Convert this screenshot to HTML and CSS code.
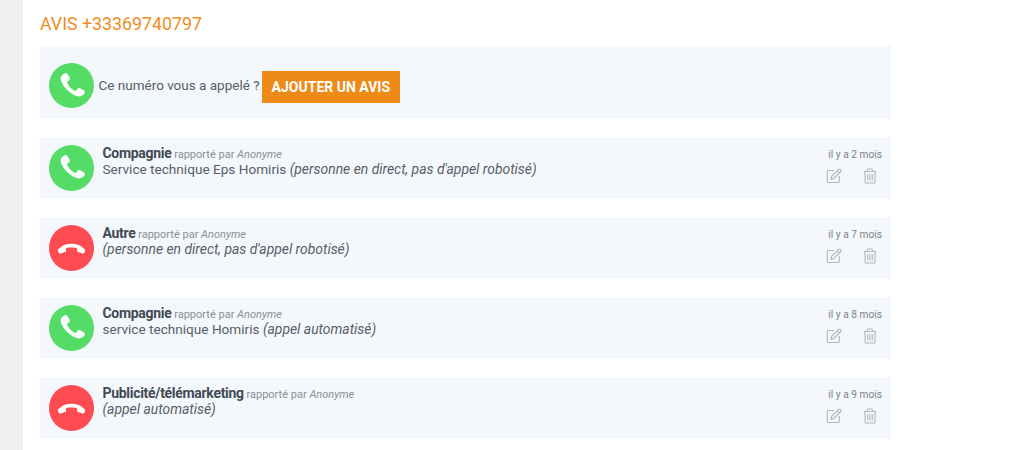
FILE: index.html
```html
<!DOCTYPE html>
<html lang="fr">
<head>
  <meta charset="UTF-8" />
  <title>Avis +33369740797</title>
  <link rel="stylesheet" href="styles.css">
</head>
<body>
  <svg class="sprites" width="0" height="0">
    <symbol id="phone" viewBox="0 0 24 24">
      <path d="M6.600 1.800c.7-.4 1.500-.2 1.900.5l2 3.300c.4.700.2 1.400-.4 1.900L8.700 8.700c-.4.300-.4.700-.3 1.100.6 1.400 1.400 2.800 2.500 3.900s2.500 2.100 4 2.700c.4.100.8.100 1.100-.3l1.200-1.500c.5-.6 1.200-.7 1.900-.4l3.300 2c.7.4.9 1.200.5 1.900-.9 1.700-2.400 3-4.500 3-2.800 0-6.500-1.900-9.700-5.100S3 8.700 3 6.200c0-2 1.400-3.500 3.600-4.400z"/>
    </symbol>
    <symbol id="hangup" viewBox="0 0 24 24">
      <path d="M1.300 13.200C3.800 10.300 7.700 8.900 12 8.900s8.200 1.400 10.700 4.300c.6.700.7 1.400.4 2.100l-.5 1c-.3.600-.9.800-1.500.6l-3.600-1.100c-.6-.2-.9-.6-.9-1.200v-1.500c0-.4-.2-.6-.6-.7-1.300-.3-2.900-.4-4-.4s-2.700.1-4 .4c-.4.100-.6.300-.6.700v1.500c0 .6-.3 1-.9 1.200l-3.600 1.100c-.6.2-1.200 0-1.500-.6l-.5-1c-.3-.7-.2-1.400.4-2.100z"/>
    </symbol>
    <symbol id="edit" viewBox="0 0 16 16">
      <path d="M8 2.500H2.500a1.200 1.200 0 0 0-1.200 1.200v9.600a1.200 1.200 0 0 0 1.200 1.200h9.600a1.200 1.200 0 0 0 1.200-1.200V8M5.500 8.600l-.7 2.800 2.800-.7 7.200-7.200a1 1 0 0 0 0-1.400l-.7-.7a1 1 0 0 0-1.400 0zM11.200 3l2 2" fill="none" stroke="currentColor" stroke-width="1.100"/>
    </symbol>
    <symbol id="trash" viewBox="0 0 16 16">
      <path d="M1.800 3.500h12.400M5.500 3.500V2a1 1 0 0 1 1-1h3a1 1 0 0 1 1 1v1.500M3 3.500V14a1 1 0 0 0 1 1h8a1 1 0 0 0 1-1V3.500M5.700 6v6.500M8 6v6.500M10.300 6v6.500" fill="none" stroke="currentColor" stroke-width="1.100"/>
    </symbol>
  </svg>

  <div class="page">
    <main class="content">
      <h1>AVIS +33369740797</h1>

      <div class="ask panel">
        <span class="badge green"><svg><use href="#phone"/></svg></span>
        <span class="ask-text">Ce numéro vous a appelé ?</span>
        <a class="add-btn" href="#">AJOUTER UN AVIS</a>
      </div>

      <div class="report panel">
        <span class="badge green"><svg><use href="#phone"/></svg></span>
        <div class="report-body">
          <div class="report-head"><strong>Compagnie</strong> rapporté par <em>Anonyme</em></div>
          <div class="report-text">Service technique Eps Homiris <em>(personne en direct, pas d'appel robotisé)</em></div>
        </div>
        <div class="report-side">
          <span class="report-date">il y a 2 mois</span>
          <div class="report-actions">
            <svg class="edit"><use href="#edit"/></svg>
            <svg class="trash"><use href="#trash"/></svg>
          </div>
        </div>
      </div>

      <div class="report panel">
        <span class="badge red"><svg><use href="#hangup"/></svg></span>
        <div class="report-body">
          <div class="report-head"><strong>Autre</strong> rapporté par <em>Anonyme</em></div>
          <div class="report-text"><em>(personne en direct, pas d'appel robotisé)</em></div>
        </div>
        <div class="report-side">
          <span class="report-date">il y a 7 mois</span>
          <div class="report-actions">
            <svg class="edit"><use href="#edit"/></svg>
            <svg class="trash"><use href="#trash"/></svg>
          </div>
        </div>
      </div>

      <div class="report panel">
        <span class="badge green"><svg><use href="#phone"/></svg></span>
        <div class="report-body">
          <div class="report-head"><strong>Compagnie</strong> rapporté par <em>Anonyme</em></div>
          <div class="report-text">service technique Homiris <em>(appel automatisé)</em></div>
        </div>
        <div class="report-side">
          <span class="report-date">il y a 8 mois</span>
          <div class="report-actions">
            <svg class="edit"><use href="#edit"/></svg>
            <svg class="trash"><use href="#trash"/></svg>
          </div>
        </div>
      </div>

      <div class="report panel">
        <span class="badge red"><svg><use href="#hangup"/></svg></span>
        <div class="report-body">
          <div class="report-head"><strong>Publicité/télémarketing</strong> rapporté par <em>Anonyme</em></div>
          <div class="report-text"><em>(appel automatisé)</em></div>
        </div>
        <div class="report-side">
          <span class="report-date">il y a 9 mois</span>
          <div class="report-actions">
            <svg class="edit"><use href="#edit"/></svg>
            <svg class="trash"><use href="#trash"/></svg>
          </div>
        </div>
      </div>
    </main>
  </div>
</body>
</html>
```

FILE: styles.css
```css
html, body {
  margin: 0;
  height: 450px;
  overflow: hidden;
  background-color: #fff;
}
body {
  font-family: Roboto, "Liberation Sans", sans-serif;
  color: #4a5560;
}
.sprites {
  display: block;
}
.page {
  height: 450px;
  border-left: 23px solid #f0f0f0;
  padding-left: 17px;
}
.content {
  width: 851px;
}
h1 {
  margin: 0;
  padding-top: 13px;
  height: 45.500px;
  font-size: 17.800px;
  line-height: 22px;
  font-weight: 400;
  color: #f08c1e;
  box-sizing: border-box;
}
.panel {
  display: flex;
  align-items: center;
  background-color: #f4f7fb;
  padding: 0 9px 0 8.500px;
  box-sizing: border-box;
}
.ask {
  height: 73.500px;
  margin-bottom: 17.500px;
  padding-top: 6px;
}
.report {
  height: 62.500px;
  margin-bottom: 17.500px;
}
.badge {
  flex: none;
  width: 45.500px;
  height: 45.500px;
  border-radius: 50%;
  display: flex;
  align-items: center;
  justify-content: center;
  color: #fff;
}
.badge svg {
  width: 29px;
  height: 29px;
  fill: #fff;
}
.green {
  background-color: #55dc67;
}
.red {
  background-color: #ff4b52;
}
.ask-text {
  margin-left: 4.500px;
  font-size: 13.500px;
  color: #555f69;
}
.add-btn {
  margin: 4px 0 0 2.500px;
  height: 32px;
  padding: 0 9.500px;
  display: flex;
  align-items: center;
  background-color: #ee8a18;
  color: #fff;
  font-size: 14px;
  font-weight: 700;
  text-decoration: none;
}
.report-body {
  flex: 1;
  margin-left: 8.500px;
  align-self: flex-start;
  padding-top: 8px;
}
.report-head {
  font-size: 11px;
  line-height: 16px;
  color: #8b9096;
}
.report-head strong {
  font-size: 14px;
  color: #3f4a55;
  letter-spacing: -0.3px;
}
.report-text {
  margin-top: -2px;
  font-size: 13.600px;
  line-height: 16px;
  color: #555f69;
}
.report-text em {
  font-size: 13.900px;
}
.report-side {
  align-self: flex-start;
  padding-top: 11px;
  display: flex;
  flex-direction: column;
  align-items: flex-end;
}
.report-date {
  font-size: 10.200px;
  line-height: 14px;
  color: #7d8287;
}
.report-actions {
  display: flex;
  gap: 20px;
  margin-top: 6px;
  margin-right: 4px;
  color: #b4b7ba;
}
.report-actions .edit {
  width: 16px;
  height: 16px;
}
.report-actions .trash {
  width: 16px;
  height: 16px;
}
```
